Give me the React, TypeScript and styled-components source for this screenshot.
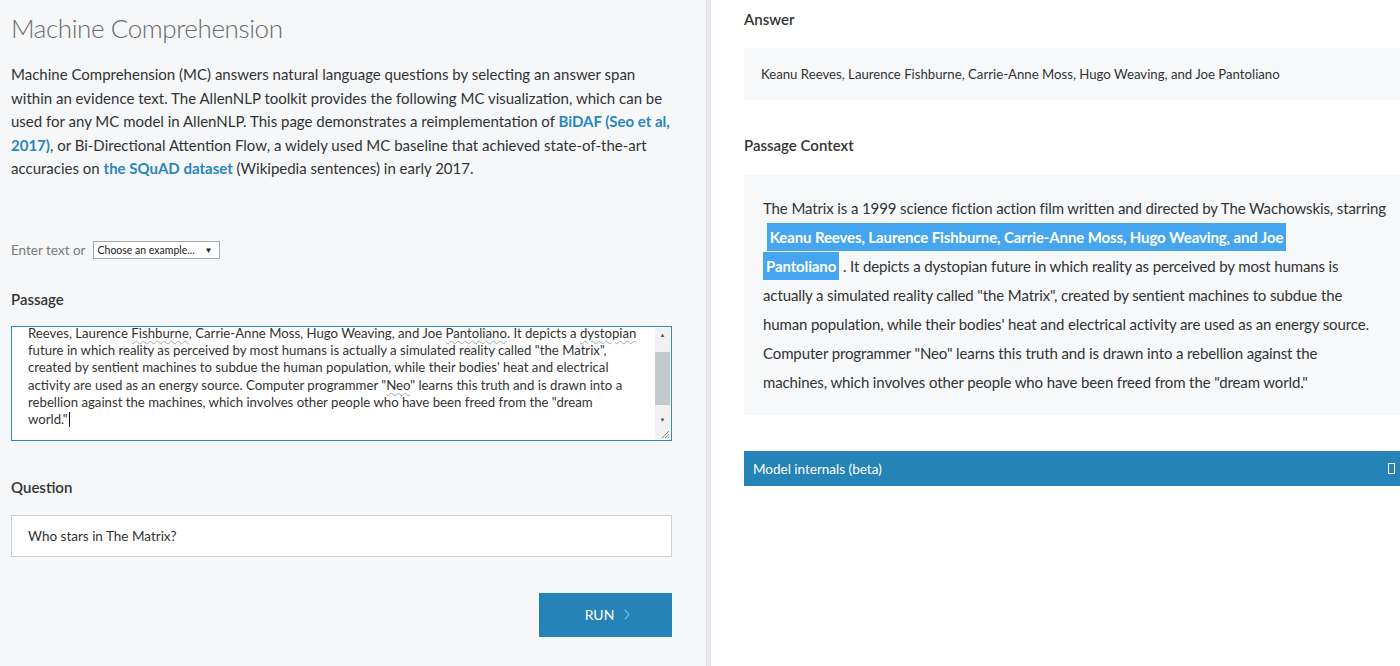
import React from "react";
import styled, { createGlobalStyle } from "styled-components";

const Global = createGlobalStyle`
  html, body { margin: 0; padding: 0; overflow: hidden; }
  body { font-family: Lato, "Liberation Sans", sans-serif; color: #333; background: #fff; }
  #root { width: 1400px; height: 666px; overflow: hidden; }
`;

const Page = styled.div`
  display: flex;
  width: 1400px;
  height: 666px;
  overflow: hidden;
`;

const LeftPane = styled.div`
  flex: 0 0 706px;
  box-sizing: border-box;
  padding: 0 34px 0 11px;
  background: #f5f7f9;
  display: flex;
  flex-direction: column;
`;

const Divider = styled.div`
  flex: 0 0 4px;
  background: #e9ecef;
  border-left: 1px solid #dde1e5;
`;

const RightPane = styled.div`
  flex: 0 0 auto;
  width: 700px;
  box-sizing: border-box;
  padding-left: 33px;
  background: #fff;
  display: flex;
  flex-direction: column;
`;

const Title = styled.h1`
  margin: 11px 0 0;
  font-size: 26px;
  line-height: 34px;
  font-weight: 300;
  color: #6a6a6a;
  letter-spacing: -0.4px;
`;

const Intro = styled.p`
  margin: 18px 0 0;
  font-size: 15px;
  line-height: 23.5px;
  color: #333;
  white-space: nowrap;
`;

const Link = styled.a`
  color: #2a86be;
  font-weight: 700;
  text-decoration: none;
`;

const ExampleRow = styled.div`
  margin-top: 59px;
  display: flex;
  align-items: center;
  gap: 7px;
  height: 20px;
  font-size: 13.5px;
  color: #7a7a7a;
`;

const Select = styled.div`
  width: 127px;
  height: 18px;
  box-sizing: border-box;
  border: 1px solid #a9a9a9;
  background: #fff;
  display: flex;
  align-items: center;
  justify-content: space-between;
  padding: 0 6px 0 4px;
  font-size: 10.5px;
  color: #222;
`;

const Caret = styled.span`
  font-size: 8px;
  color: #222;
`;

const Label = styled.div<{ $top: number }>`
  margin-top: ${(p) => p.$top}px;
  font-size: 15px;
  line-height: 20px;
  font-weight: 600;
  color: #333;
`;

const TextArea = styled.div`
  margin-top: 17px;
  height: 115px;
  box-sizing: border-box;
  border: 1px solid #2d8ac7;
  background: #fff;
  display: flex;
`;

const TextAreaBody = styled.div`
  flex: 1;
  overflow: hidden;
  display: flex;
  flex-direction: column;
  justify-content: flex-end;
  padding: 0 0 11px 16px;
  font-size: 13.2px;
  line-height: 17.3px;
  color: #333;
  white-space: nowrap;
`;

const Squiggle = styled.span`
  text-decoration: underline wavy #9aa;
  text-decoration-thickness: 1px;
  text-underline-offset: 2px;
`;

const Cursor = styled.span`
  display: inline-block;
  width: 1px;
  height: 15px;
  background: #111;
  vertical-align: -3px;
  margin-left: 1px;
`;

const Scrollbar = styled.div`
  flex: 0 0 15px;
  display: flex;
  flex-direction: column;
  background: #f1f1f1;
  margin: 1px 1px 1px 0;
`;

const ScrollArrow = styled.div`
  height: 14px;
  display: flex;
  align-items: center;
  justify-content: center;
  font-size: 6px;
  color: #555;
`;

const ScrollTrack = styled.div`
  flex: 1;
  display: flex;
  flex-direction: column;
  padding: 10px 0 8px;
`;

const Thumb = styled.div`
  flex: 1;
  background: #c2c8ce;
`;

const Grip = styled.div`
  height: 12px;
  display: flex;
  align-items: flex-end;
  justify-content: flex-end;
`;

const QuestionInput = styled.div`
  margin-top: 18px;
  height: 42px;
  box-sizing: border-box;
  border: 1px solid #c9d0d6;
  background: #fff;
  display: flex;
  align-items: center;
  padding-left: 16px;
  font-size: 13.5px;
  color: #333;
`;

const ButtonRow = styled.div`
  margin-top: 36px;
  display: flex;
  justify-content: flex-end;
`;

const RunButton = styled.button`
  width: 133px;
  height: 44px;
  border: none;
  background: #2583b7;
  color: #fff;
  font-family: inherit;
  font-size: 14px;
  display: flex;
  align-items: center;
  justify-content: center;
  gap: 10px;
  padding: 0 0 0 4px;
`;

const Box = styled.div<{ $top: number }>`
  margin-top: ${(p) => p.$top}px;
  background: #f6f8fa;
`;

const AnswerBox = styled(Box)`
  height: 52px;
  display: flex;
  align-items: center;
  padding-left: 17px;
  font-size: 13.2px;
  color: #333;
`;

const ContextBox = styled(Box)`
  height: 240px;
  box-sizing: border-box;
  padding: 19px 0 0 19px;
  font-size: 15px;
  letter-spacing: -0.12px;
  line-height: 29px;
  color: #333;
  white-space: nowrap;
`;

const Highlight = styled.span`
  background: #45a6ef;
  color: #fff;
  font-weight: 700;
  padding: 5px 3px;
`;

const InternalsBar = styled.div`
  margin-top: 36px;
  height: 35px;
  background: #2583b7;
  display: flex;
  align-items: center;
  justify-content: space-between;
  padding: 0 16px 0 9px;
  color: #fff;
  font-size: 13.5px;
`;

const Tofu = styled.span`
  width: 5px;
  height: 9px;
  border: 1px solid #fff;
`;

export default function App() {
  return (
    <>
      <Global />
      <Page>
        <LeftPane>
          <Title>Machine Comprehension</Title>
          <Intro>
            Machine Comprehension (MC) answers natural language questions by selecting an answer span
            <br />
            within an evidence text. The AllenNLP toolkit provides the following MC visualization, which can be
            <br />
            used for any MC model in AllenNLP. This page demonstrates a reimplementation of <Link>BiDAF (Seo et al,</Link>
            <br />
            <Link>2017)</Link>, or Bi-Directional Attention Flow, a widely used MC baseline that achieved state-of-the-art
            <br />
            accuracies on <Link>the SQuAD dataset</Link> (Wikipedia sentences) in early 2017.
          </Intro>
          <ExampleRow>
            Enter text or
            <Select>
              Choose an example...
              <Caret>▼</Caret>
            </Select>
          </ExampleRow>
          <Label $top={29}>Passage</Label>
          <TextArea>
            <TextAreaBody>
              <div>The Matrix is a 1999 science fiction action film written and directed by The Wachowskis, starring Keanu</div>
              <div>
                Reeves, Laurence <Squiggle>Fishburne</Squiggle>, Carrie-Anne Moss, Hugo Weaving, and Joe{" "}
                <Squiggle>Pantoliano</Squiggle>. It depicts a <Squiggle>dystopian</Squiggle>
              </div>
              <div>future in which reality as perceived by most humans is actually a simulated reality called "the Matrix",</div>
              <div>created by sentient machines to subdue the human population, while their bodies' heat and electrical</div>
              <div>
                activity are used as an energy source. Computer programmer "<Squiggle>Neo</Squiggle>" learns this truth and is drawn into a
              </div>
              <div>rebellion against the machines, which involves other people who have been freed from the "dream</div>
              <div>
                world."
                <Cursor />
              </div>
            </TextAreaBody>
            <Scrollbar>
              <ScrollArrow>▲</ScrollArrow>
              <ScrollTrack>
                <Thumb />
              </ScrollTrack>
              <ScrollArrow>▼</ScrollArrow>
              <Grip>
                <svg width="10" height="10" viewBox="0 0 10 10">
                  <path d="M9 2 L2 9 M9 5 L5 9 M9 8 L8 9" stroke="#888" strokeWidth="1" />
                </svg>
              </Grip>
            </Scrollbar>
          </TextArea>
          <Label $top={36}>Question</Label>
          <QuestionInput>Who stars in The Matrix?</QuestionInput>
          <ButtonRow>
            <RunButton>
              RUN
              <svg width="6" height="11" viewBox="0 0 6 11">
                <path d="M0.7 0.7 L5 5.5 L0.7 10.3" fill="none" stroke="#7cc4f0" strokeWidth="1.1" />
              </svg>
            </RunButton>
          </ButtonRow>
        </LeftPane>
        <Divider />
        <RightPane>
          <Label $top={9}>Answer</Label>
          <AnswerBox $top={19}>
            Keanu Reeves, Laurence Fishburne, Carrie-Anne Moss, Hugo Weaving, and Joe Pantoliano
          </AnswerBox>
          <Label $top={35}>Passage Context</Label>
          <ContextBox $top={20}>
            The Matrix is a 1999 science fiction action film written and directed by The Wachowskis, starring
            <br />
            &nbsp;<Highlight>Keanu Reeves, Laurence Fishburne, Carrie-Anne Moss, Hugo Weaving, and Joe</Highlight>
            <br />
            <Highlight>Pantoliano</Highlight> . It depicts a dystopian future in which reality as perceived by most humans is
            <br />
            actually a simulated reality called "the Matrix", created by sentient machines to subdue the
            <br />
            human population, while their bodies' heat and electrical activity are used as an energy source.
            <br />
            Computer programmer "Neo" learns this truth and is drawn into a rebellion against the
            <br />
            machines, which involves other people who have been freed from the "dream world."
          </ContextBox>
          <InternalsBar>
            Model internals (beta)
            <Tofu />
          </InternalsBar>
        </RightPane>
      </Page>
    </>
  );
}
